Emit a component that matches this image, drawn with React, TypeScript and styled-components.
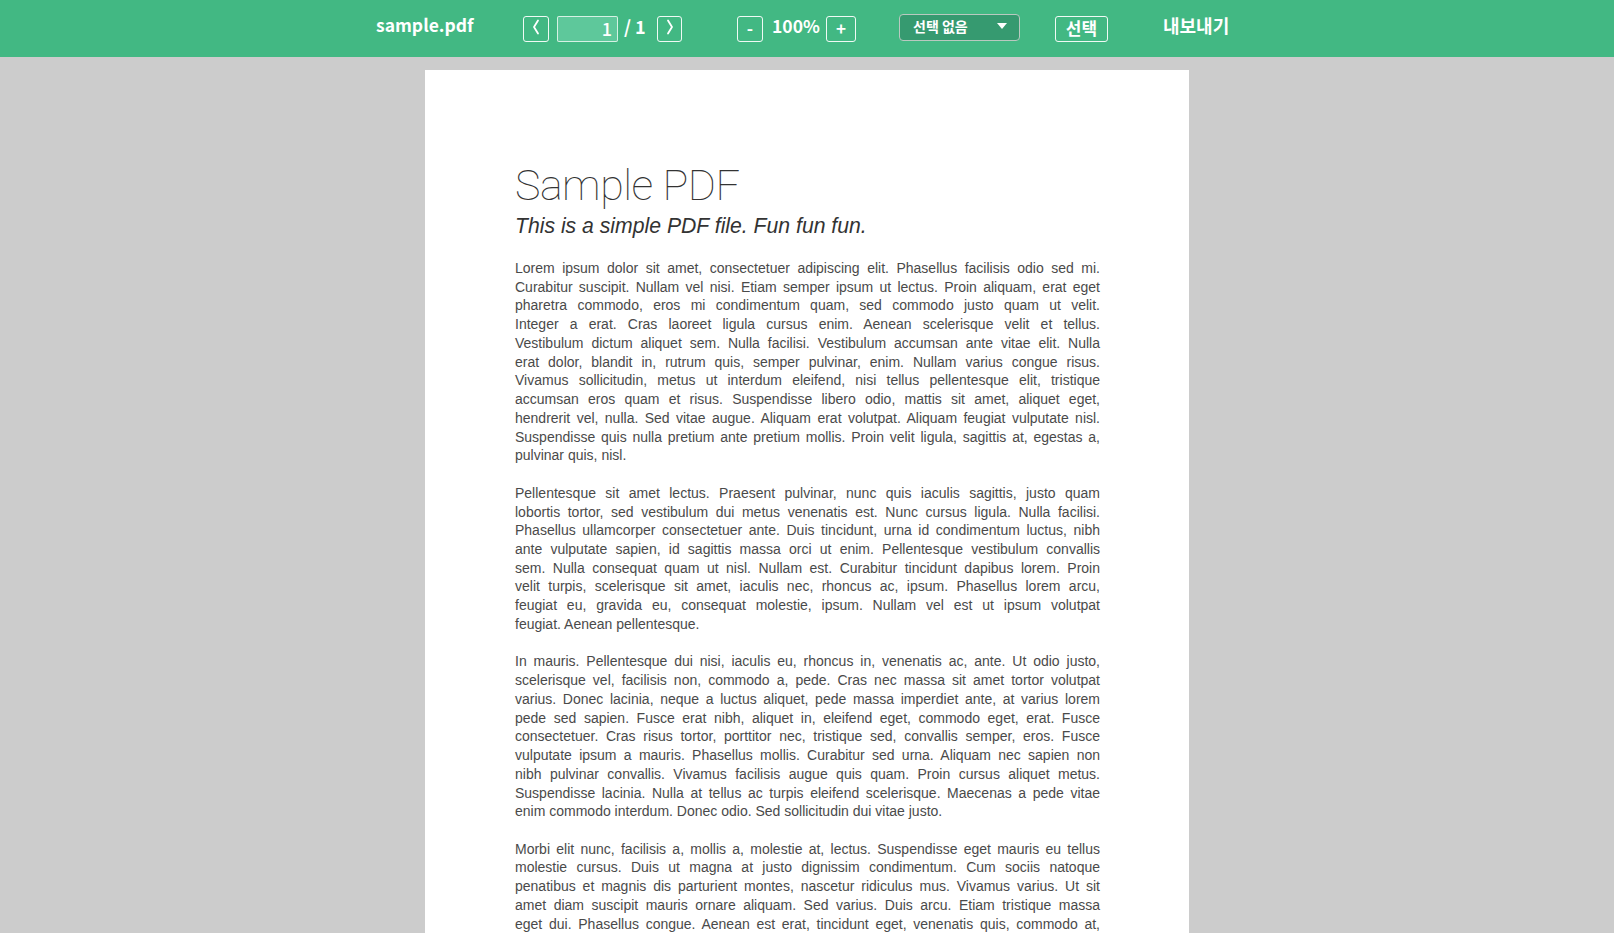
import React from "react";
import styled, { createGlobalStyle } from "styled-components";

const GlobalStyle = createGlobalStyle`
  html, body {
    margin: 0;
    padding: 0;
    height: 100%;
    overflow: hidden;
    background: #cccccc;
  }
  #root { height: 100%; }
  * { box-sizing: border-box; }
`;

const Shell = styled.div`
  height: 100vh;
  display: flex;
  flex-direction: column;
  overflow: hidden;
  background: #cccccc;
`;

const Toolbar = styled.header`
  flex: 0 0 57px;
  height: 57px;
  background: #42b883;
  display: flex;
  align-items: center;
  padding-left: 376px;
  color: #ffffff;
  font-family: "Noto Sans CJK KR", "Noto Sans", sans-serif;
`;

const FileName = styled.div`
  width: 97px;
  font-size: 17.5px;
  font-weight: 700;
  line-height: 26px;
  margin-top: -7px;
  white-space: nowrap;
`;

const ToolButton = styled.button<{ $w: number; $ml: number }>`
  width: ${(p) => p.$w}px;
  height: 26px;
  margin-left: ${(p) => p.$ml}px;
  padding: 0 0 3px;
  border: 1px solid rgba(255, 255, 255, 0.92);
  border-radius: 3px;
  background: transparent;
  color: #ffffff;
  display: flex;
  align-items: center;
  justify-content: center;
  font-family: "Noto Sans CJK KR", "Noto Sans", sans-serif;
  font-size: 17px;
  font-weight: 700;
  line-height: 1;
  cursor: pointer;
`;

const PageInput = styled.input`
  width: 61px;
  height: 26px;
  margin-left: 8px;
  padding: 0 5px 2px 0;
  border: 1px solid rgba(235, 248, 241, 0.85);
  border-radius: 2px;
  background: #5ec89b;
  color: #ffffff;
  text-align: right;
  font-family: "Noto Sans CJK KR", "Noto Sans", sans-serif;
  font-size: 18px;
  font-weight: 500;
  outline: none;
`;

const ToolText = styled.span<{ $w: number; $ml: number; $size: number }>`
  width: ${(p) => p.$w}px;
  margin-left: ${(p) => p.$ml}px;
  margin-top: -5px;
  font-size: ${(p) => p.$size}px;
  font-weight: 700;
  text-align: center;
  white-space: nowrap;
  line-height: 26px;
`;

const SelectBox = styled.div`
  width: 121px;
  height: 27px;
  margin-left: 43px;
  margin-top: -2px;
  padding: 0 12px 3px 13px;
  display: flex;
  align-items: center;
  justify-content: space-between;
  background: #369a70;
  border: 1px solid #b9c9c0;
  border-radius: 4px;
  font-size: 14px;
  font-weight: 700;
`;

const ExportLink = styled.span`
  margin-left: 55px;
  width: 66px;
  font-size: 18px;
  font-weight: 700;
  white-space: nowrap;
  margin-top: -8px;
`;

const Viewer = styled.main`
  flex: 1 1 auto;
  overflow: hidden;
  display: flex;
  justify-content: center;
  padding-top: 13px;
`;

const Page = styled.article`
  flex: 0 0 auto;
  width: 764px;
  min-height: 989px;
  background: #ffffff;
  padding: 94px 89px 60px 90px;
  color: #444444;
`;

const Title = styled.h1`
  margin: 0;
  font-family: Roboto, "Liberation Sans", sans-serif;
  font-weight: 100;
  font-size: 43px;
  line-height: 43px;
  letter-spacing: -0.5px;
  color: #333333;
`;

const Subtitle = styled.h2`
  margin: 7px 0 0;
  font-family: "Liberation Sans", Arial, sans-serif;
  font-style: italic;
  font-weight: 400;
  font-size: 21.2px;
  line-height: 24px;
  color: #333333;
`;

const Body = styled.section`
  margin-top: 21px;
  font-family: "Liberation Sans", Arial, sans-serif;
  font-size: 14px;
  line-height: 18.73px;
  color: #4a4a4a;
`;

const Paragraph = styled.p`
  margin: 0 0 18.73px;
`;

const Line = styled.span<{ $last?: boolean }>`
  display: block;
  text-align: justify;
  text-align-last: ${(p) => (p.$last ? "left" : "justify")};
`;

const paragraphs: string[][] = [
  [
    "Lorem ipsum dolor sit amet, consectetuer adipiscing elit. Phasellus facilisis odio sed mi.",
    "Curabitur suscipit. Nullam vel nisi. Etiam semper ipsum ut lectus. Proin aliquam, erat eget",
    "pharetra commodo, eros mi condimentum quam, sed commodo justo quam ut velit.",
    "Integer a erat. Cras laoreet ligula cursus enim. Aenean scelerisque velit et tellus.",
    "Vestibulum dictum aliquet sem. Nulla facilisi. Vestibulum accumsan ante vitae elit. Nulla",
    "erat dolor, blandit in, rutrum quis, semper pulvinar, enim. Nullam varius congue risus.",
    "Vivamus sollicitudin, metus ut interdum eleifend, nisi tellus pellentesque elit, tristique",
    "accumsan eros quam et risus. Suspendisse libero odio, mattis sit amet, aliquet eget,",
    "hendrerit vel, nulla. Sed vitae augue. Aliquam erat volutpat. Aliquam feugiat vulputate nisl.",
    "Suspendisse quis nulla pretium ante pretium mollis. Proin velit ligula, sagittis at, egestas a,",
    "pulvinar quis, nisl.",
  ],
  [
    "Pellentesque sit amet lectus. Praesent pulvinar, nunc quis iaculis sagittis, justo quam",
    "lobortis tortor, sed vestibulum dui metus venenatis est. Nunc cursus ligula. Nulla facilisi.",
    "Phasellus ullamcorper consectetuer ante. Duis tincidunt, urna id condimentum luctus, nibh",
    "ante vulputate sapien, id sagittis massa orci ut enim. Pellentesque vestibulum convallis",
    "sem. Nulla consequat quam ut nisl. Nullam est. Curabitur tincidunt dapibus lorem. Proin",
    "velit turpis, scelerisque sit amet, iaculis nec, rhoncus ac, ipsum. Phasellus lorem arcu,",
    "feugiat eu, gravida eu, consequat molestie, ipsum. Nullam vel est ut ipsum volutpat",
    "feugiat. Aenean pellentesque.",
  ],
  [
    "In mauris. Pellentesque dui nisi, iaculis eu, rhoncus in, venenatis ac, ante. Ut odio justo,",
    "scelerisque vel, facilisis non, commodo a, pede. Cras nec massa sit amet tortor volutpat",
    "varius. Donec lacinia, neque a luctus aliquet, pede massa imperdiet ante, at varius lorem",
    "pede sed sapien. Fusce erat nibh, aliquet in, eleifend eget, commodo eget, erat. Fusce",
    "consectetuer. Cras risus tortor, porttitor nec, tristique sed, convallis semper, eros. Fusce",
    "vulputate ipsum a mauris. Phasellus mollis. Curabitur sed urna. Aliquam nec sapien non",
    "nibh pulvinar convallis. Vivamus facilisis augue quis quam. Proin cursus aliquet metus.",
    "Suspendisse lacinia. Nulla at tellus ac turpis eleifend scelerisque. Maecenas a pede vitae",
    "enim commodo interdum. Donec odio. Sed sollicitudin dui vitae justo.",
  ],
  [
    "Morbi elit nunc, facilisis a, mollis a, molestie at, lectus. Suspendisse eget mauris eu tellus",
    "molestie cursus. Duis ut magna at justo dignissim condimentum. Cum sociis natoque",
    "penatibus et magnis dis parturient montes, nascetur ridiculus mus. Vivamus varius. Ut sit",
    "amet diam suscipit mauris ornare aliquam. Sed varius. Duis arcu. Etiam tristique massa",
    "eget dui. Phasellus congue. Aenean est erat, tincidunt eget, venenatis quis, commodo at,",
    "quam.",
  ],
];

const Chevron = ({ dir }: { dir: "left" | "right" }) => (
  <svg width="8" height="16" viewBox="0 0 8 16" aria-hidden="true">
    <polyline
      points={dir === "left" ? "6,1.5 2,8 6,14.5" : "2,1.5 6,8 2,14.5"}
      fill="none"
      stroke="#ffffff"
      strokeWidth="1.8"
      strokeLinecap="round"
      strokeLinejoin="round"
    />
  </svg>
);

const Caret = () => (
  <svg width="10" height="6" viewBox="0 0 10 6" aria-hidden="true">
    <polygon points="0,0 10,0 5,6" fill="#ffffff" />
  </svg>
);

export default function App() {
  return (
    <>
      <GlobalStyle />
      <Shell>
        <Toolbar>
          <FileName>sample.pdf</FileName>
          <ToolButton $w={26} $ml={50} aria-label="이전 페이지">
            <Chevron dir="left" />
          </ToolButton>
          <PageInput defaultValue="1" aria-label="페이지" />
          <ToolText $w={19} $ml={6} $size={18}>
            / 1
          </ToolText>
          <ToolButton $w={25} $ml={14} aria-label="다음 페이지">
            <Chevron dir="right" />
          </ToolButton>
          <ToolButton $w={26} $ml={55} aria-label="축소">
            -
          </ToolButton>
          <ToolText $w={46} $ml={9} $size={17.5}>
            100%
          </ToolText>
          <ToolButton $w={30} $ml={8} aria-label="확대">
            +
          </ToolButton>
          <SelectBox>
            <span>선택 없음</span>
            <Caret />
          </SelectBox>
          <ToolButton $w={53} $ml={35}>
            선택
          </ToolButton>
          <ExportLink>내보내기</ExportLink>
        </Toolbar>
        <Viewer>
          <Page>
            <Title>Sample PDF</Title>
            <Subtitle>This is a simple PDF file. Fun fun fun.</Subtitle>
            <Body>
              {paragraphs.map((lines, pi) => (
                <Paragraph key={pi}>
                  {lines.map((l, li) => (
                    <Line key={li} $last={li === lines.length - 1}>
                      {l}
                    </Line>
                  ))}
                </Paragraph>
              ))}
            </Body>
          </Page>
        </Viewer>
      </Shell>
    </>
  );
}
